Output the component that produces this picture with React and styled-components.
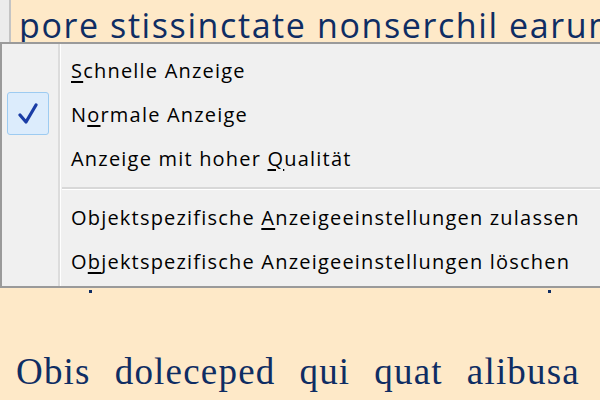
import React from 'react';
import styled, { createGlobalStyle } from 'styled-components';

const Global = createGlobalStyle`
  html, body {
    margin: 0;
    padding: 0;
    background: #fee9c8;
  }
`;

const Page = styled.div`
  position: relative;
  width: 600px;
  height: 400px;
  overflow: hidden;
  background: #fee9c8;
  display: flex;
  flex-direction: column;
`;

const TopLine = styled.div`
  display: flex;
  height: 42px;
  flex-shrink: 0;
`;

const Rail = styled.div`
  width: 9px;
  flex-shrink: 0;
  background: #ececec;
  border-right: 2px solid #c4c4c4;
`;

const HeadText = styled.div`
  padding-left: 8px;
  padding-top: 5px;
  font-family: 'Open Sans', Lato, sans-serif;
  font-size: 34px;
  line-height: 40px;
  color: #0f2d63;
  white-space: nowrap;
  letter-spacing: 1.6px;
`;

const Covered = styled.div`
  height: 246px;
  flex-shrink: 0;
`;

const Ticks = styled.div`
  display: flex;
  height: 6px;
  padding-top: 2px;
  padding-left: 89px;
  gap: 456px;
`;

const Tick = styled.span`
  width: 3px;
  height: 3px;
  background: #0f2d63;
`;

const Para = styled.p`
  margin: 56px 0 0;
  padding: 0 20px 0 16px;
  font-family: 'Liberation Serif', serif;
  font-size: 37px;
  line-height: 40px;
  letter-spacing: 1.2px;
  color: #0f2d63;
  text-align: justify;
  text-align-last: justify;
`;

const Menu = styled.div`
  position: absolute;
  top: 42px;
  left: 0;
  width: 640px;
  height: 246px;
  box-sizing: border-box;
  background: #f0f0f0;
  border: 2px solid #9a9a9a;
  border-right: none;
  display: grid;
  grid-template-columns: 58px 1fr;
`;

const Gutter = styled.div`
  border-right: 2px solid #dcdcdc;
  box-shadow: 1px 0 0 #ffffff;
`;

const Items = styled.div`
  padding-top: 4px;
  display: flex;
  flex-direction: column;
`;

const Item = styled.div`
  position: relative;
  height: 44px;
  display: flex;
  align-items: center;
  padding-left: 11px;
  font-family: 'Open Sans', 'Noto Sans', sans-serif;
  font-size: 20px;
  letter-spacing: 1.2px;
  color: #000;
  white-space: nowrap;

  u {
    text-decoration-thickness: 1.5px;
    text-underline-offset: 3px;
  }
`;

const CheckBox = styled.span`
  position: absolute;
  left: -53px;
  top: 0;
  width: 42px;
  height: 43px;
  box-sizing: border-box;
  border: 1.5px solid #9dcbf1;
  border-radius: 3px;
  background: #dcecfc;
  display: flex;
  align-items: center;
  justify-content: center;
`;

const Separator = styled.div`
  height: 15px;
  display: flex;
  align-items: center;

  &::after {
    content: '';
    flex: 1;
    height: 2px;
    margin-left: 2px;
    background: #d8d8d8;
    box-shadow: 0 1px 0 #ffffff;
  }
`;

const Check = () => (
  <svg width="20" height="22" viewBox="0 0 20 22">
    <path
      d="M2 12 L8 19 L18 2"
      fill="none"
      stroke="#1a3da6"
      strokeWidth="3.2"
      strokeLinecap="round"
      strokeLinejoin="round"
    />
  </svg>
);

export default function App() {
  return (
    <>
      <Global />
      <Page>
        <TopLine>
          <Rail />
          <HeadText>pore stissinctate nonserchil earumque</HeadText>
        </TopLine>
        <Covered />
        <Ticks>
          <Tick />
          <Tick />
        </Ticks>
        <Para>Obis doleceped qui quat alibusa</Para>

        <Menu>
          <Gutter />
          <Items>
            <Item>
              <span><u>S</u>chnelle Anzeige</span>
            </Item>
            <Item>
              <CheckBox>
                <Check />
              </CheckBox>
              <span>N<u>o</u>rmale Anzeige</span>
            </Item>
            <Item>
              <span>Anzeige mit hoher <u>Q</u>ualität</span>
            </Item>
            <Separator />
            <Item>
              <span>Objektspezifische <u>A</u>nzeigeeinstellungen zulassen</span>
            </Item>
            <Item>
              <span>O<u>b</u>jektspezifische Anzeigeeinstellungen löschen</span>
            </Item>
          </Items>
        </Menu>
      </Page>
    </>
  );
}
